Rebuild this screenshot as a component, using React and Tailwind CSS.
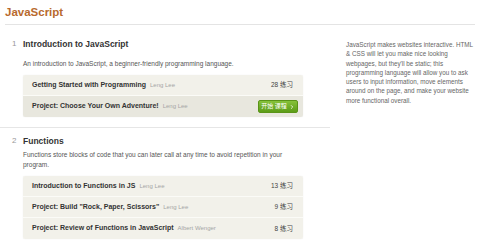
import { ChevronRight } from 'lucide-react';

const font = { fontFamily: '"Liberation Sans", Arial, "Noto Sans CJK SC", sans-serif' };

function Row({ title, author, count, active, button }) {
  return (
    <div
      className={`flex h-[21px] items-center justify-between pl-[9px] ${
        button ? 'pr-[5px]' : 'pr-[10px]'
      } ${active ? 'bg-[#e8e7de]' : 'bg-[#f2f1ea]'}`}
    >
      <div className="flex items-baseline gap-[4px]">
        <span className="text-[7px] font-bold text-[#333]">{title}</span>
        <span className="text-[6px] text-[#a5a5a5]">{author}</span>
      </div>
      {button ? (
        <button className="flex h-[13px] w-[40px] items-center justify-center gap-[2px] rounded-[2px] border border-[#5a9418] bg-gradient-to-b from-[#86c23a] to-[#5c9c16] text-[6px] text-white">
          开始 课程 <ChevronRight className="h-[6px] w-[6px]" strokeWidth={3} />
        </button>
      ) : (
        <span className="text-[6.5px] text-[#444]">{count} 练习</span>
      )}
    </div>
  );
}

function Box({ children }) {
  return (
    <div className="ml-[23px] w-[280px] overflow-hidden rounded-[2px] divide-y divide-[#fbfbf7] shadow-[0_0_1px_rgba(0,0,0,0.12)]">
      {children}
    </div>
  );
}

export default function App() {
  return (
    <div className="h-[244px] w-[480px] overflow-hidden bg-white" style={font}>
      {/* Title */}
      <div className="px-[5px]">
        <h1 className="h-[25px] border-b border-[#e4e4e4] text-[11.5px] font-bold leading-[24px] text-[#b86a2e]">
          JavaScript
        </h1>
      </div>

      <div className="flex">
        {/* Main column */}
        <div className="w-[330px]">
          {/* Section 1 */}
          <div className="border-b border-[#e6e6e6] pb-[10px] pt-[13px]">
            <div className="flex h-[12px] items-center">
              <span className="w-[23px] pl-[12px] text-[8px] text-[#999]">1</span>
              <span className="text-[8.5px] font-bold text-[#333]">Introduction to JavaScript</span>
            </div>
            <p className="ml-[23px] mt-[9px] h-[10px] text-[6.5px] leading-[10px] text-[#555]">
              An introduction to JavaScript, a beginner-friendly programming language.
            </p>
            <div className="mt-[6px]">
              <Box>
                <Row title="Getting Started with Programming" author="Leng Lee" count="28" />
                <Row title="Project: Choose Your Own Adventure!" author="Leng Lee" active button />
              </Box>
            </div>
          </div>

          {/* Section 2 */}
          <div className="pt-[7px]">
            <div className="flex h-[12px] items-center">
              <span className="w-[23px] pl-[12px] text-[8px] text-[#999]">2</span>
              <span className="text-[8.5px] font-bold text-[#333]">Functions</span>
            </div>
            <p className="ml-[23px] mt-[3px] w-[280px] text-[6.5px] leading-[10px] text-[#555]">
              Functions store blocks of code that you can later call at any time to avoid repetition in your program.
            </p>
            <div className="mt-[6px]">
              <Box>
                <Row title="Introduction to Functions in JS" author="Leng Lee" count="13" />
                <Row title={'Project: Build "Rock, Paper, Scissors"'} author="Leng Lee" count="9" />
                <Row title="Project: Review of Functions in JavaScript" author="Albert Wenger" count="8" />
              </Box>
            </div>
          </div>
        </div>

        {/* Sidebar */}
        <div className="ml-[16px] w-[130px] pt-[15px]">
          <p className="text-[6.3px] leading-[9.3px] text-[#666]">
            JavaScript makes websites interactive. HTML &amp; CSS will let you make nice looking webpages, but
            they'll be static; this programming language will allow you to ask users to input information, move
            elements around on the page, and make your website more functional overall.
          </p>
        </div>
      </div>
    </div>
  );
}
